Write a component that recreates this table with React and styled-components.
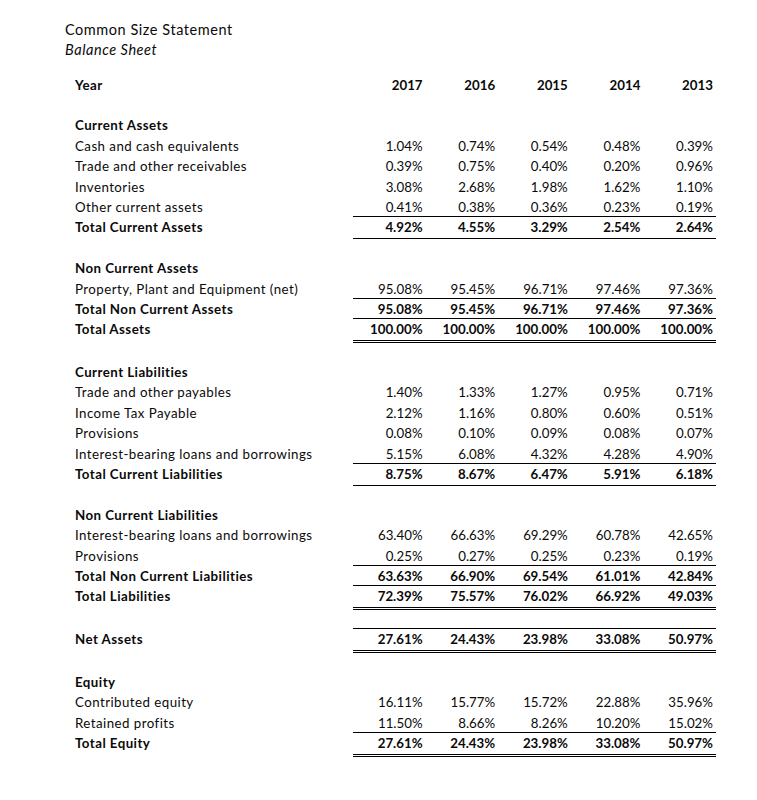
import React from "react";
import styled, { createGlobalStyle } from "styled-components";

const GlobalStyle = createGlobalStyle`
  html, body {
    margin: 0;
    padding: 0;
    background: #ffffff;
  }
  body {
    font-family: "Lato", "Open Sans", "Liberation Sans", sans-serif;
    color: #0a0a0a;
  }
`;

//layout
const Page = styled.div`
  width: 757px;
  height: 800px;
  padding: 20px 0 0 65px;
  box-sizing: border-box;
  background: #ffffff;
`;

const TitleBlock = styled.div`
  font-size: 14.5px;
  line-height: 20px;
  letter-spacing: 0.55px;
`;

const Subtitle = styled.div`
  font-style: italic;
`;

const Sheet = styled.div`
  margin-top: 13.6px;
  margin-left: 10px;
  display: flex;
  flex-direction: column;
`;

const Row = styled.div`
  display: grid;
  grid-template-columns: 278px repeat(5, 72.6px);
  height: ${(p) => p.$h || 20.4}px;
  font-size: 13.3px;
  line-height: 22px;
  font-weight: ${(p) => (p.$bold ? 700 : 400)};
`;

const Label = styled.div`
  white-space: nowrap;
  letter-spacing: 0.45px;
`;

const Value = styled.div`
  text-align: right;
  padding-right: 3px;
  box-sizing: border-box;
  height: 100%;
  white-space: nowrap;
  border-top: ${(p) => (p.$top ? "1px solid #000" : "none")};
  border-bottom: ${(p) =>
    p.$bottom === "double"
      ? "3px double #000"
      : p.$bottom === "single"
      ? "1px solid #000"
      : "none"};
  line-height: ${(p) => (p.$top ? "21px" : "22px")};
`;

//data
const years = ["2017", "2016", "2015", "2014", "2013"];

const rows = [
  { label: "Year", bold: true, values: years, raw: true },
  { blank: true },
  { label: "Current Assets", bold: true },
  { label: "Cash and cash equivalents", values: [1.04, 0.74, 0.54, 0.48, 0.39] },
  { label: "Trade and other receivables", values: [0.39, 0.75, 0.4, 0.2, 0.96] },
  { label: "Inventories", values: [3.08, 2.68, 1.98, 1.62, 1.1] },
  { label: "Other current assets", values: [0.41, 0.38, 0.36, 0.23, 0.19] },
  { label: "Total Current Assets", bold: true, top: true, bottom: "single", values: [4.92, 4.55, 3.29, 2.54, 2.64] },
  { blank: true },
  { label: "Non Current Assets", bold: true },
  { label: "Property, Plant and Equipment (net)", values: [95.08, 95.45, 96.71, 97.46, 97.36] },
  { label: "Total Non Current Assets", bold: true, top: true, values: [95.08, 95.45, 96.71, 97.46, 97.36] },
  { label: "Total Assets", bold: true, top: true, bottom: "double", h: 22.4, values: [100, 100, 100, 100, 100] },
  { blank: true },
  { label: "Current Liabilities", bold: true },
  { label: "Trade and other payables", values: [1.4, 1.33, 1.27, 0.95, 0.71] },
  { label: "Income Tax Payable", values: [2.12, 1.16, 0.8, 0.6, 0.51] },
  { label: "Provisions", values: [0.08, 0.1, 0.09, 0.08, 0.07] },
  { label: "Interest-bearing loans and borrowings", values: [5.15, 6.08, 4.32, 4.28, 4.9] },
  { label: "Total Current Liabilities", bold: true, top: true, bottom: "single", values: [8.75, 8.67, 6.47, 5.91, 6.18] },
  { blank: true },
  { label: "Non Current Liabilities", bold: true },
  { label: "Interest-bearing loans and borrowings", values: [63.4, 66.63, 69.29, 60.78, 42.65] },
  { label: "Provisions", values: [0.25, 0.27, 0.25, 0.23, 0.19] },
  { label: "Total Non Current Liabilities", bold: true, top: true, values: [63.63, 66.9, 69.54, 61.01, 42.84] },
  { label: "Total Liabilities", bold: true, top: true, bottom: "double", h: 22.4, values: [72.39, 75.57, 76.02, 66.92, 49.03] },
  { blank: true },
  { label: "Net Assets", bold: true, top: true, bottom: "double", h: 24.4, values: [27.61, 24.43, 23.98, 33.08, 50.97] },
  { blank: true, h: 18.4 },
  { label: "Equity", bold: true },
  { label: "Contributed equity", values: [16.11, 15.77, 15.72, 22.88, 35.96] },
  { label: "Retained profits", values: [11.5, 8.66, 8.26, 10.2, 15.02] },
  { label: "Total Equity", bold: true, top: true, bottom: "double", h: 22.4, values: [27.61, 24.43, 23.98, 33.08, 50.97] },
];

const pct = (v) => `${v.toFixed(2)}%`;

const App = () => (
  <Page>
    <GlobalStyle />
    <TitleBlock>
      <div>Common Size Statement</div>
      <Subtitle>Balance Sheet</Subtitle>
    </TitleBlock>
    <Sheet>
      {rows.map((r, i) =>
        r.blank ? (
          <Row key={i} $h={r.h} />
        ) : (
          <Row key={i} $h={r.h} $bold={r.bold}>
            <Label>{r.label}</Label>
            {(r.values || []).map((v, j) => (
              <Value key={j} $top={r.top} $bottom={r.bottom}>
                {r.raw ? v : pct(v)}
              </Value>
            ))}
          </Row>
        )
      )}
    </Sheet>
  </Page>
);

export default App;
